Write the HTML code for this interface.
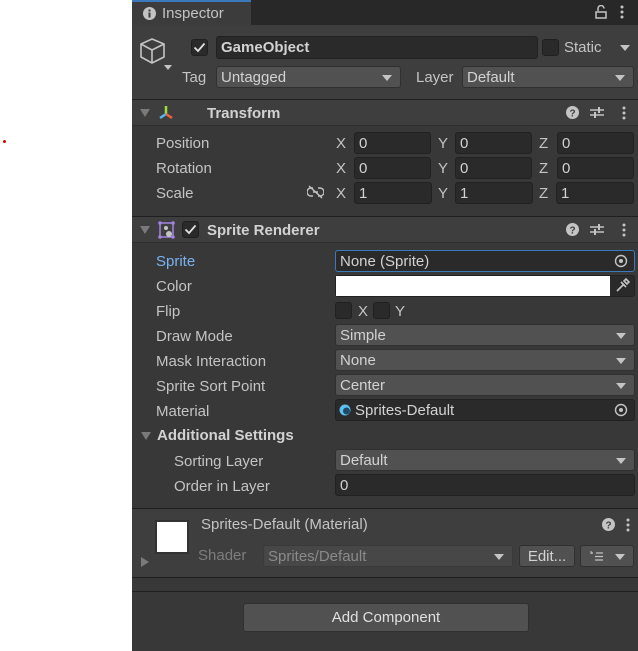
<!DOCTYPE html>
<html><head><meta charset="utf-8"><style>
*{margin:0;padding:0;box-sizing:border-box}
body{width:638px;height:651px;background:#fff;position:relative;overflow:hidden;font-family:"Liberation Sans",sans-serif;font-size:15px;color:#c4c4c4}
.a{position:absolute}
.panel{left:132px;top:0;width:506px;height:651px;background:#383838}
.lbl{position:absolute;line-height:22px;white-space:nowrap}
.fld{position:absolute;background:#2a2a2a;border:1px solid #212121;border-radius:3px;height:22px;line-height:22px;padding-left:4px;color:#d2d2d2;white-space:nowrap}
.dd{position:absolute;background:#515151;border:1px solid #303030;border-radius:3px;height:22px;line-height:22px;padding-left:4px;color:#d2d2d2;white-space:nowrap}
.dd:after{content:"";position:absolute;right:8px;top:8px;border-left:5px solid transparent;border-right:5px solid transparent;border-top:6px solid #c4c4c4}
.btn{position:absolute;background:#515151;border:1px solid #303030;border-radius:3px;height:22px;line-height:21px;text-align:center;color:#d2d2d2;white-space:nowrap}
.hdr{position:absolute;left:132px;width:506px;height:27px;background:#3e3e3e;border-top:1px solid #1f1f1f;border-bottom:1px solid #2e2e2e}
.tri{position:absolute;border-left:5px solid transparent;border-right:5px solid transparent;border-top:8px solid #7a7a7a}
.b{font-weight:bold;color:#d2d2d2}
.cb{position:absolute;width:17px;height:17px;background:#2a2a2a;border:1px solid #202020;border-radius:3px}
</style></head><body>
<div class="a" style="left:3px;top:140px;width:3px;height:3px;background:#d00;border-radius:50%"></div>
<div class="a panel"></div>
<div class="a" style="left:132px;top:0;width:506px;height:25px;background:#282828"></div>
<div class="a" style="left:132px;top:0;width:119px;height:25px;background:#3c3c3c;border-top:2px solid #3a79bb"></div>
<svg class="a" style="left:143px;top:7px" width="13" height="13"><circle cx="6.5" cy="6.5" r="6.5" fill="#c4c4c4"/><rect x="5.5" y="5.5" width="2" height="5" fill="#3c3c3c"/><rect x="5.5" y="2.5" width="2" height="2" fill="#3c3c3c"/></svg>
<div class="lbl" style="left:162px;top:3px">Inspector</div>
<svg class="a" style="left:594px;top:5px" width="14" height="14"><path d="M4 6V3.5a3 3 0 0 1 6 0" fill="none" stroke="#c4c4c4" stroke-width="1.5"/><rect x="2" y="7" width="10" height="6" fill="none" stroke="#c4c4c4" stroke-width="1.5"/></svg>
<svg class="a" style="left:619px;top:5px" width="6" height="14"><circle cx="3" cy="2" r="1.5" fill="#c4c4c4"/><circle cx="3" cy="7" r="1.5" fill="#c4c4c4"/><circle cx="3" cy="12" r="1.5" fill="#c4c4c4"/></svg>
<div class="a" style="left:132px;top:25px;width:506px;height:74px;background:#3e3e3e"></div>
<svg class="a" style="left:139px;top:37px" width="28" height="28"><path d="M13 2L25 7V20L13 26L2 20V7Z M2 7L13 13L25 7 M13 13V26" fill="none" stroke="#c4c4c4" stroke-width="1.6" stroke-linejoin="round"/></svg>
<div class="a" style="left:164px;top:65px;border-left:4px solid transparent;border-right:4px solid transparent;border-top:5px solid #c4c4c4"></div>
<div class="cb" style="left:191px;top:39px"></div>
<svg class="a" style="left:193px;top:42px" width="13" height="11"><path d="M1.5 5.5L5 9L11.5 1.5" fill="none" stroke="#e0e0e0" stroke-width="1.8"/></svg>
<div class="fld b" style="left:216px;top:36px;width:322px;height:23px;font-weight:bold">GameObject</div>
<div class="cb" style="left:542px;top:39px"></div>
<div class="lbl" style="left:564px;top:37px">Static</div>
<div class="a" style="left:620px;top:45px;border-left:5px solid transparent;border-right:5px solid transparent;border-top:6px solid #c4c4c4"></div>
<div class="lbl" style="left:182px;top:67px">Tag</div>
<div class="dd" style="left:216px;top:66px;width:185px">Untagged</div>
<div class="lbl" style="left:416px;top:67px">Layer</div>
<div class="dd" style="left:462px;top:66px;width:172px">Default</div>
<div class="hdr" style="top:99px"></div>
<div class="tri" style="left:140px;top:109px"></div>
<svg class="a" style="left:158px;top:105px" width="16" height="16"><path d="M8 9V1" stroke="#9ae03c" stroke-width="2.5"/><path d="M8 9L2 13" stroke="#4fb8f0" stroke-width="2.5"/><path d="M8 9L14 13" stroke="#f0623c" stroke-width="2.5"/></svg>
<div class="lbl b" style="left:207px;top:103px">Transform</div>
<svg class="a" style="left:566px;top:106px" width="13" height="13"><circle cx="6.5" cy="6.5" r="6.5" fill="#c4c4c4"/><text x="6.5" y="10.5" font-size="10" font-weight="bold" text-anchor="middle" fill="#3e3e3e" font-family="Liberation Sans">?</text></svg>
<svg class="a" style="left:590px;top:106px" width="14" height="13"><path d="M0 4H14M0 9H14" stroke="#c4c4c4" stroke-width="1.5"/><rect x="8" y="1" width="2" height="6" fill="#c4c4c4"/><rect x="4" y="6" width="2" height="6" fill="#c4c4c4"/></svg>
<svg class="a" style="left:621px;top:106px" width="6" height="14"><circle cx="3" cy="2" r="1.5" fill="#c4c4c4"/><circle cx="3" cy="7" r="1.5" fill="#c4c4c4"/><circle cx="3" cy="12" r="1.5" fill="#c4c4c4"/></svg>
<div class="lbl" style="left:156px;top:133px">Position</div>
<div class="lbl" style="left:156px;top:158px">Rotation</div>
<div class="lbl" style="left:156px;top:183px">Scale</div>
<svg class="a" style="left:307px;top:185px" width="17" height="14"><path d="M6 3H4a4 4 0 0 0 0 8h2M11 3h2a4 4 0 0 1 0 8h-2M6 7h5" fill="none" stroke="#c4c4c4" stroke-width="1.4"/><path d="M2 1L15 13" stroke="#c4c4c4" stroke-width="1.4"/></svg>
<div class="lbl" style="left:336px;top:133px">X</div><div class="fld" style="left:354px;top:132px;width:77px">0</div>
<div class="lbl" style="left:438px;top:133px">Y</div><div class="fld" style="left:455px;top:132px;width:77px">0</div>
<div class="lbl" style="left:539px;top:133px">Z</div><div class="fld" style="left:557px;top:132px;width:77px">0</div>
<div class="lbl" style="left:336px;top:158px">X</div><div class="fld" style="left:354px;top:157px;width:77px">0</div>
<div class="lbl" style="left:438px;top:158px">Y</div><div class="fld" style="left:455px;top:157px;width:77px">0</div>
<div class="lbl" style="left:539px;top:158px">Z</div><div class="fld" style="left:557px;top:157px;width:77px">0</div>
<div class="lbl" style="left:336px;top:183px">X</div><div class="fld" style="left:354px;top:182px;width:78px">1</div>
<div class="lbl" style="left:438px;top:183px">Y</div><div class="fld" style="left:455px;top:182px;width:78px">1</div>
<div class="lbl" style="left:539px;top:183px">Z</div><div class="fld" style="left:556px;top:182px;width:78px">1</div>
<div class="hdr" style="top:216px"></div>
<div class="tri" style="left:140px;top:226px"></div>
<svg class="a" style="left:158px;top:221px" width="18" height="18"><rect x="2" y="2" width="13" height="14" fill="none" stroke="#a383e0" stroke-width="1.5"/><circle cx="2" cy="2" r="1.8" fill="#a383e0"/><circle cx="15" cy="2" r="1.8" fill="#a383e0"/><circle cx="2" cy="16" r="1.8" fill="#a383e0"/><circle cx="15" cy="16" r="1.8" fill="#a383e0"/><circle cx="11" cy="13" r="3" fill="#c4c4c4"/><circle cx="8" cy="7" r="2" fill="#c4c4c4"/></svg>
<div class="cb" style="left:182px;top:221px"></div>
<svg class="a" style="left:184px;top:224px" width="13" height="11"><path d="M1.5 5.5L5 9L11.5 1.5" fill="none" stroke="#e0e0e0" stroke-width="1.8"/></svg>
<div class="lbl b" style="left:207px;top:220px">Sprite Renderer</div>
<svg class="a" style="left:566px;top:223px" width="13" height="13"><circle cx="6.5" cy="6.5" r="6.5" fill="#c4c4c4"/><text x="6.5" y="10.5" font-size="10" font-weight="bold" text-anchor="middle" fill="#3e3e3e" font-family="Liberation Sans">?</text></svg>
<svg class="a" style="left:590px;top:223px" width="14" height="13"><path d="M0 4H14M0 9H14" stroke="#c4c4c4" stroke-width="1.5"/><rect x="8" y="1" width="2" height="6" fill="#c4c4c4"/><rect x="4" y="6" width="2" height="6" fill="#c4c4c4"/></svg>
<svg class="a" style="left:621px;top:223px" width="6" height="14"><circle cx="3" cy="2" r="1.5" fill="#c4c4c4"/><circle cx="3" cy="7" r="1.5" fill="#c4c4c4"/><circle cx="3" cy="12" r="1.5" fill="#c4c4c4"/></svg>
<div class="lbl" style="left:156px;top:251px;color:#7ab3f0">Sprite</div>
<div class="fld" style="left:335px;top:250px;width:300px;border-color:#3a79bb">None (Sprite)</div>
<svg class="a" style="left:614px;top:254px" width="14" height="14"><circle cx="7" cy="7" r="5.5" fill="none" stroke="#c4c4c4" stroke-width="1.4"/><circle cx="7" cy="7" r="2" fill="#c4c4c4"/></svg>
<div class="lbl" style="left:156px;top:276px">Color</div>
<div class="a" style="left:335px;top:275px;width:300px;height:22px;background:#2a2a2a;border:1px solid #212121;border-radius:3px"></div>
<div class="a" style="left:336px;top:276px;width:274px;height:20px;background:#fff"></div>
<svg class="a" style="left:615px;top:278px" width="15" height="15"><path d="M2 13L9 6M6 4L11 9M9 3l2-2 3 3-2 2z" fill="none" stroke="#c4c4c4" stroke-width="1.6"/></svg>
<div class="lbl" style="left:156px;top:301px">Flip</div>
<div class="cb" style="left:335px;top:302px"></div><div class="lbl" style="left:358px;top:301px">X</div>
<div class="cb" style="left:373px;top:302px"></div><div class="lbl" style="left:395px;top:301px">Y</div>
<div class="lbl" style="left:156px;top:326px">Draw Mode</div><div class="dd" style="left:335px;top:324px;width:300px">Simple</div>
<div class="lbl" style="left:156px;top:351px">Mask Interaction</div><div class="dd" style="left:335px;top:349px;width:300px">None</div>
<div class="lbl" style="left:156px;top:376px">Sprite Sort Point</div><div class="dd" style="left:335px;top:374px;width:300px">Center</div>
<div class="lbl" style="left:156px;top:401px">Material</div>
<div class="fld" style="left:335px;top:399px;width:300px;padding-left:19px">Sprites-Default</div>
<svg class="a" style="left:339px;top:404px" width="12" height="12"><circle cx="6" cy="6" r="5.5" fill="#5fc0f0"/><circle cx="7.5" cy="7" r="3.5" fill="#1d4a66"/></svg>
<svg class="a" style="left:614px;top:403px" width="14" height="14"><circle cx="7" cy="7" r="5.5" fill="none" stroke="#c4c4c4" stroke-width="1.4"/><circle cx="7" cy="7" r="2" fill="#c4c4c4"/></svg>
<div class="tri" style="left:141px;top:432px"></div>
<div class="lbl b" style="left:157px;top:425px">Additional Settings</div>
<div class="lbl" style="left:174px;top:451px">Sorting Layer</div><div class="dd" style="left:335px;top:449px;width:300px">Default</div>
<div class="lbl" style="left:174px;top:476px">Order in Layer</div><div class="fld" style="left:335px;top:474px;width:300px">0</div>
<div class="a" style="left:132px;top:508px;width:506px;height:70px;background:#3e3e3e;border-top:1px solid #1f1f1f;border-bottom:1px solid #1f1f1f"></div>
<div class="a" style="left:155px;top:520px;width:34px;height:34px;background:#333"></div>
<div class="a" style="left:157px;top:522px;width:30px;height:30px;background:#fff"></div>
<div class="a" style="left:141px;top:557px;border-top:5px solid transparent;border-bottom:5px solid transparent;border-left:8px solid #7a7a7a"></div>
<div class="lbl" style="left:201px;top:514px">Sprites-Default (Material)</div>
<svg class="a" style="left:602px;top:518px" width="13" height="13"><circle cx="6.5" cy="6.5" r="6.5" fill="#c4c4c4"/><text x="6.5" y="10.5" font-size="10" font-weight="bold" text-anchor="middle" fill="#3e3e3e" font-family="Liberation Sans">?</text></svg>
<svg class="a" style="left:625px;top:518px" width="6" height="14"><circle cx="3" cy="2" r="1.5" fill="#c4c4c4"/><circle cx="3" cy="7" r="1.5" fill="#c4c4c4"/><circle cx="3" cy="12" r="1.5" fill="#c4c4c4"/></svg>
<div class="lbl" style="left:198px;top:545px;color:#7e7e7e">Shader</div>
<div class="dd" style="left:263px;top:545px;width:250px;background:#474747;color:#8a8a8a;border-color:#3a3a3a">Sprites/Default</div>
<div class="btn" style="left:519px;top:545px;width:56px">Edit...</div>
<div class="dd" style="left:580px;top:545px;width:54px"></div>
<svg class="a" style="left:590px;top:550px" width="14" height="12"><path d="M1 3H3M6 3H13M5 6.5H13M5 10H13" stroke="#c4c4c4" stroke-width="1.2"/><path d="M1 1V4" stroke="#c4c4c4"/></svg>
<div class="a" style="left:132px;top:591px;width:506px;height:1px;background:#1f1f1f"></div>
<div class="a" style="left:243px;top:603px;width:286px;height:29px;background:#515151;border:1px solid #303030;border-radius:3px;text-align:center;line-height:28px;color:#e0e0e0">Add Component</div>
</body></html>
